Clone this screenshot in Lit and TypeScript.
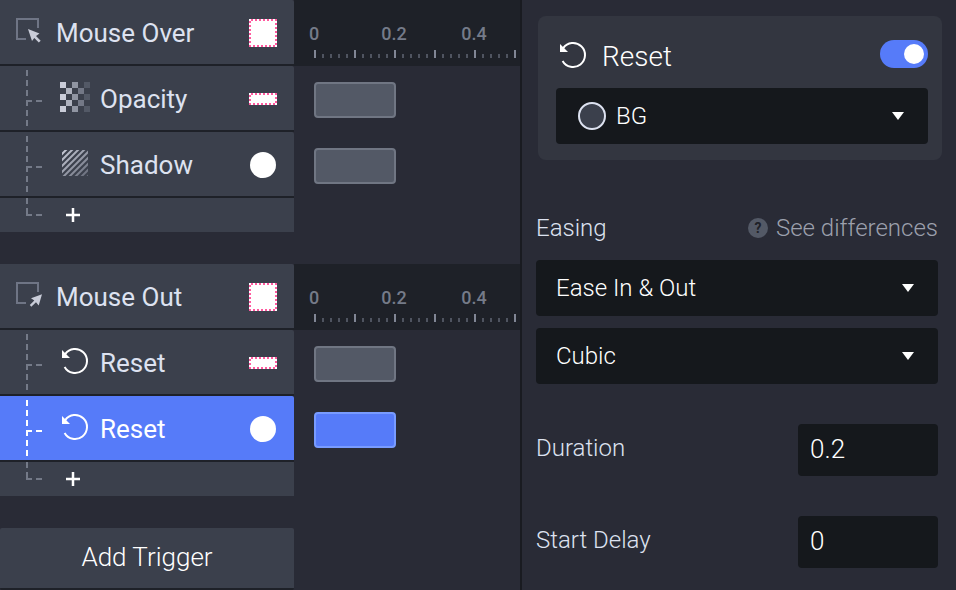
import { LitElement, html, svg, css, nothing } from "lit";
import { customElement, property, state } from "lit/decorators.js";
import { classMap } from "lit/directives/class-map.js";
import { styleMap } from "lit/directives/style-map.js";

type Glyph = "over" | "out" | "opacity" | "shadow" | "reset";
type Shape = "square" | "strip" | "circle";

interface Response {
  icon: Glyph;
  label: string;
  target: Shape;
  start: number;
  duration: number;
}

interface Trigger {
  icon: Glyph;
  label: string;
  responses: Response[];
}

const PX_PER_SECOND = 400;

const TRIGGERS: Trigger[] = [
  {
    icon: "over",
    label: "Mouse Over",
    responses: [
      { icon: "opacity", label: "Opacity", target: "strip", start: 0, duration: 0.2 },
      { icon: "shadow", label: "Shadow", target: "circle", start: 0, duration: 0.2 },
    ],
  },
  {
    icon: "out",
    label: "Mouse Out",
    responses: [
      { icon: "reset", label: "Reset", target: "strip", start: 0, duration: 0.2 },
      { icon: "reset", label: "Reset", target: "circle", start: 0, duration: 0.2 },
    ],
  },
];

const CHECKER = ["#c9ccd8", "#aeb2be", "#9095a2", "#737886", "#535966"];

const checker = () => {
  const cells = [];
  for (let c = 0; c < 5; c++)
    for (let r = c % 2; r < 5; r += 2)
      cells.push(svg`<rect x=${c * 6} y=${r * 6} width="6" height="6" fill=${CHECKER[c]} />`);
  return svg`<g shape-rendering="crispEdges">${cells}</g>`;
};

const hatch = () => {
  const lines = [];
  for (let k = 4; k < 54; k += 6)
    lines.push(svg`<path d=${`M-2 ${k + 2}L${k + 2} -2`} />`);
  return svg`
    <defs>
      <linearGradient id="fade" gradientUnits="userSpaceOnUse" x1="0" y1="0" x2="26" y2="26">
        <stop offset="0" stop-color="#c9ccd8" /><stop offset="1" stop-color="#666b79" />
      </linearGradient>
      <clipPath id="box"><rect width="26" height="26" /></clipPath>
    </defs>
    <g clip-path="url(#box)" stroke="url(#fade)" stroke-width="2">${lines}</g>`;
};

const frame = svg`<path d="M22 10V1H1V21H10" fill="none" stroke="#6f7585" stroke-width="2" />`;

@customElement("ui-glyph")
export class UiGlyph extends LitElement {
  @property() name: Glyph = "reset";

  static styles = css`
    :host { display: block; flex: none; }
    svg { display: block; overflow: visible; }
  `;

  render() {
    switch (this.name) {
      case "over":
        return html`<svg width="26" height="26">${frame}
          <path d="M12 11L23.500 15.500L20 18L24.700 22.700L22.800 24.500L18.300 20L16 23Z" fill="#c9ccd8" /></svg>`;
      case "out":
        return html`<svg width="26" height="26">${frame}
          <path d="M26 12.300L15 16.300L18.300 18.500L13.800 23L15.300 24.700L20 20.300L22.700 23.500Z" fill="#c9ccd8" /></svg>`;
      case "opacity":
        return html`<svg width="30" height="30">${checker()}</svg>`;
      case "shadow":
        return html`<svg width="26" height="26">${hatch()}</svg>`;
      default:
        return html`<svg width="26" height="26">
          <path d="M3.200 6.100A12 12 0 1 1 2.600 19" fill="none" stroke="#fff" stroke-width="2" />
          <path d="M0 2V10H8Z" fill="#fff" /></svg>`;
    }
  }
}

@customElement("app-root")
export class AppRoot extends LitElement {
  @state() private selected = "1-1";

  static styles = css`
    :host {
      display: block;
      font-family: Roboto, "Liberation Sans", sans-serif;
      color: #dde2f0;
    }
    * { box-sizing: border-box; }
    button, select, input {
      font: inherit;
      color: inherit;
      border: 0;
      margin: 0;
      padding: 0;
      background: none;
    }
    button { cursor: pointer; text-align: left; }
    .app {
      display: flex;
      min-height: 100vh;
      background: #292b36;
    }
    .timeline {
      flex: 1;
      min-width: 0;
      border-right: 2px solid #191b21;
    }
    .trigger { margin-bottom: 32px; }
    .line { display: flex; }
    .name {
      width: 294px;
      height: 66px;
      flex: none;
      display: flex;
      align-items: center;
      padding: 0 17px 0 16px;
      background: #3b404c;
      border-bottom: 2px solid #1e2128;
      border-top-right-radius: 2px;
      font-size: 26px;
      line-height: 32px;
    }
    .text { flex: 1; padding-top: 2px; }
    .head .text { padding-left: 14px; }
    .head ui-glyph { padding-bottom: 2px; }
    .child { padding-left: 26px; }
    .child.selected { background: #567bf9; color: #fff; }
    .tree {
      flex: none;
      width: 16px;
      height: 64px;
      color: #747a88;
    }
    .selected .tree { color: #fff; }
    .tree.end { height: 34px; }
    .slot {
      width: 58px;
      padding: 0 0 2px 20px;
      flex: none;
    }
    .slot.wide { padding-left: 18px; }
    .target {
      flex: none;
      width: 28px;
      height: 28px;
      margin-top: 2px;
      background: #fff;
    }
    .target.square, .target.strip {
      background:
        linear-gradient(#fff, #fff) center / calc(100% - 4px) calc(100% - 4px) no-repeat,
        conic-gradient(#ff5a9f 25%, #fff 0 50%, #ff5a9f 0 75%, #fff 0) 0 0 / 4px 4px;
    }
    .target.strip { height: 12px; }
    .target.circle {
      width: 26px;
      height: 26px;
      margin-right: 1px;
      border-radius: 50%;
    }
    .add {
      width: 294px;
      height: 34px;
      display: flex;
      align-items: center;
      padding-left: 26px;
      background: #3b404c;
    }
    .plus { margin-left: 24px; }
    .track {
      flex: 1;
      min-width: 0;
      padding: 16px 20px 14px;
    }
    .bar {
      display: block;
      height: 36px;
      border: 2px solid #707683;
      border-radius: 4px;
      background: #535966;
    }
    .bar.selected { background: #567bf9; border-color: #789bff; }
    .ruler {
      flex: 1;
      min-width: 0;
      overflow: hidden;
      padding-top: 22px;
      background: #1e2128;
    }
    .marks {
      display: grid;
      grid-auto-flow: column;
      grid-auto-columns: 40px;
      column-gap: 40px;
      font-size: 18px;
      font-weight: 500;
      line-height: 24px;
      text-align: center;
      color: #757b89;
    }
    .ticks {
      height: 8px;
      margin: 4px 0 0 20px;
      background:
        repeating-linear-gradient(90deg, #818695 0 2px, transparent 2px 40px),
        repeating-linear-gradient(90deg, #4f5460 0 2px, transparent 2px 8px) 0 100% / 100% 4px no-repeat;
    }
    .new {
      display: block;
      width: 294px;
      height: 62px;
      padding-bottom: 2px;
      background: #3b404c;
      border-bottom: 2px solid #1e2128;
      border-radius: 2px;
      font-size: 26px;
      font-weight: 300;
      text-align: center;
      color: #fff;
    }
    .inspector {
      width: 434px;
      flex: none;
      padding: 16px 14px;
      font-size: 24px;
      font-weight: 300;
      line-height: 32px;
    }
    .card {
      margin-left: 2px;
      padding: 24px 14px 16px 18px;
      border-radius: 8px;
      background: #333640;
      color: #fff;
    }
    .cardhead {
      display: flex;
      align-items: center;
      gap: 16px;
      height: 28px;
      margin-bottom: 20px;
    }
    .cardicon { padding: 2px 0 0 4px; }
    .title {
      flex: 1;
      font-size: 28px;
      padding-top: 6px;
    }
    .switch {
      appearance: none;
      width: 48px;
      height: 28px;
      padding: 4px;
      border-radius: 14px;
      background: #567bf9;
      display: flex;
      justify-content: flex-end;
    }
    .switch:not(:checked) { justify-content: flex-start; background: #535966; }
    .switch::before {
      content: "";
      width: 20px;
      height: 20px;
      border-radius: 50%;
      background: #fff;
    }
    .pick {
      display: grid;
      grid-template-columns: 1fr;
      align-items: center;
      color: #fff;
    }
    .pick > * { grid-area: 1 / 1; }
    .pick select {
      appearance: none;
      width: 100%;
      height: 56px;
      padding: 0 20px;
      border-radius: 4px;
      background: #15181c;
    }
    .pick svg {
      justify-self: end;
      margin-right: 24px;
      pointer-events: none;
    }
    .card .pick select { padding-left: 60px; }
    .dot {
      width: 28px;
      height: 28px;
      margin-left: 22px;
      border: 2px solid #dde2f0;
      border-radius: 50%;
      background: #3b404c;
      pointer-events: none;
    }
    .fields { margin: 52px 4px 0 0; }
    .caption {
      display: flex;
      justify-content: space-between;
      margin-bottom: 16px;
    }
    .help {
      display: flex;
      align-items: center;
      gap: 8px;
      color: #9ca0ad;
      text-decoration: none;
    }
    .badge {
      width: 20px;
      height: 20px;
      border-radius: 50%;
      background: #535966;
      color: #1e2128;
      font-size: 14px;
      font-weight: 700;
      line-height: 20px;
      text-align: center;
    }
    .stack { display: grid; gap: 12px; }
    .row {
      display: flex;
      justify-content: space-between;
      align-items: center;
      margin-top: 40px;
    }
    .row label { padding-bottom: 4px; }
    .row input {
      width: 140px;
      height: 52px;
      padding: 0 12px 2px;
      border-radius: 4px;
      background: #15181c;
      font-size: 26px;
      color: #fff;
    }
  `;

  private branch(end = false) {
    const stem = end ? "M1 0V16" : "M1 4V60";
    const arm = end ? 17 : 35;
    return html`<svg class=${classMap({ tree: true, end })} fill="none" stroke="currentColor"
      stroke-width="2" stroke-dasharray="6 4">
      <path d=${stem} /><path d=${`M0 ${arm}H16`} />
    </svg>`;
  }

  private arrow() {
    return html`<svg width="12" height="8"><path d="M0 0H12L6 8Z" fill="#fff" /></svg>`;
  }

  private ruler() {
    return html`<div class="ruler">
      <div class="marks"><span>0</span><span>0.2</span><span>0.4</span></div>
      <div class="ticks"></div>
    </div>`;
  }

  private response(r: Response, key: string) {
    const selected = this.selected === key;
    const pick = () => (this.selected = key);
    const bar = {
      width: `${r.duration * PX_PER_SECOND + 2}px`,
      marginLeft: `${r.start * PX_PER_SECOND}px`,
    };
    return html`<div class="line">
      <button class=${classMap({ name: true, child: true, selected })} @click=${pick}>
        ${this.branch()}
        <span class=${classMap({ slot: true, wide: r.icon === "opacity" })}><ui-glyph name=${r.icon}></ui-glyph></span>
        <span class="text">${r.label}</span>
        <span class="target ${r.target}"></span>
      </button>
      <div class="track">
        <button class=${classMap({ bar: true, selected })} style=${styleMap(bar)}
          aria-label="${r.label} timing" @click=${pick}></button>
      </div>
    </div>`;
  }

  private trigger(t: Trigger, i: number) {
    return html`<section class="trigger">
      <div class="line">
        <button class="name head">
          <ui-glyph name=${t.icon}></ui-glyph>
          <span class="text">${t.label}</span>
          <span class="target square"></span>
        </button>
        ${this.ruler()}
      </div>
      ${t.responses.map((r, j) => this.response(r, `${i}-${j}`))}
      <button class="add" aria-label="Add response">
        ${this.branch(true)}
        <svg class="plus" width="14" height="14"><path d="M7 0V14M0 7H14" stroke="#fff" stroke-width="2.500" /></svg>
      </button>
    </section>`;
  }

  private select(label: string, value: string, swatch = false) {
    return html`<div class="pick">
      <select aria-label=${label}><option>${value}</option></select>
      ${swatch ? html`<span class="dot"></span>` : nothing}
      ${this.arrow()}
    </div>`;
  }

  render() {
    return html`<main class="app">
      <div class="timeline">
        ${TRIGGERS.map((t, i) => this.trigger(t, i))}
        <button class="new">Add Trigger</button>
      </div>
      <aside class="inspector">
        <div class="card">
          <div class="cardhead">
            <span class="cardicon"><ui-glyph name="reset"></ui-glyph></span>
            <label class="title" for="reset">Reset</label>
            <input class="switch" id="reset" type="checkbox" role="switch" checked />
          </div>
          ${this.select("Layer", "BG", true)}
        </div>
        <div class="fields">
          <div class="caption">
            <span>Easing</span>
            <a class="help" href="#easing"><span class="badge">?</span>See differences</a>
          </div>
          <div class="stack">
            ${this.select("Easing", "Ease In & Out")}
            ${this.select("Easing curve", "Cubic")}
          </div>
          <div class="row"><label for="duration">Duration</label><input id="duration" value="0.2" /></div>
          <div class="row"><label for="delay">Start Delay</label><input id="delay" value="0" /></div>
        </div>
      </aside>
    </main>`;
  }
}
